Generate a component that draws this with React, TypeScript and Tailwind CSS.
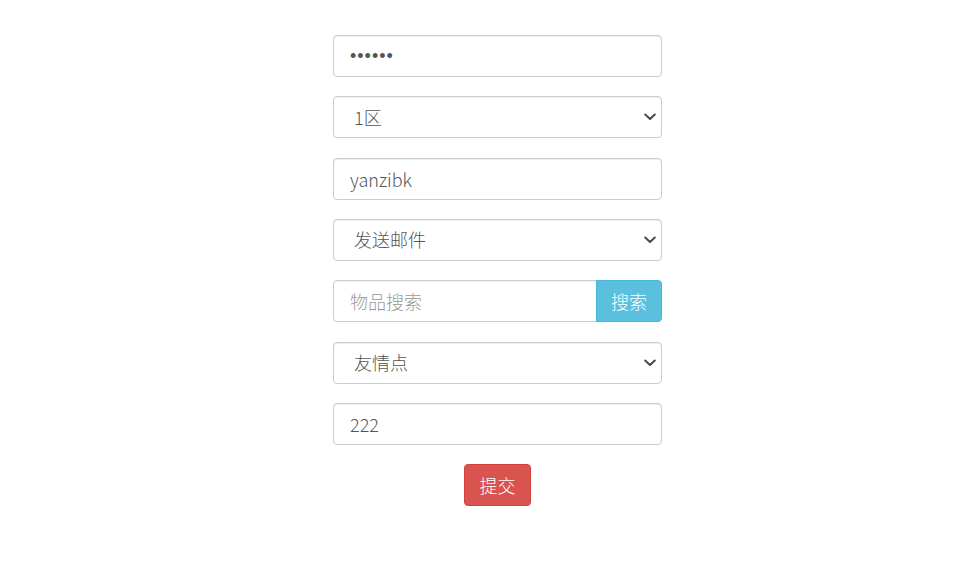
import React from "react";

const font = { fontFamily: '"Noto Sans CJK SC", "Open Sans", sans-serif' };

const inputCls =
  "block w-full h-[42px] px-[16px] text-[18px] font-light text-[#555] bg-white border border-[#ccc] rounded-[4px] shadow-[inset_0_1px_1px_rgba(0,0,0,0.075)] outline-none placeholder:text-[#999]";

function Select({ value, label }: { value: string; label: string }) {
  return (
    <div className="relative">
      <select
        className={inputCls + " appearance-none pl-[20px] pr-[30px]"}
        defaultValue={value}
      >
        <option value={value}>{label}</option>
      </select>
      <svg
        className="pointer-events-none absolute right-[6px] top-1/2 -translate-y-1/2"
        width="12"
        height="8"
        viewBox="0 0 12 8"
      >
        <polyline
          points="1.2,1.5 6,6 10.8,1.5"
          fill="none"
          stroke="#4a4a4a"
          strokeWidth="2"
          strokeLinecap="round"
          strokeLinejoin="round"
        />
      </svg>
    </div>
  );
}

export default function App() {
  return (
    <div className="min-h-[569px] bg-white pt-[35px]" style={font}>
      <form className="ml-[333px] w-[329px] flex flex-col gap-[19.33px]">
        <input
          type="password"
          defaultValue="123456"
          className={inputCls + " font-['Liberation_Sans',Arial,sans-serif] tracking-[1px]"}
        />
        <Select value="1" label="1区" />
        <input type="text" defaultValue="yanzibk" className={inputCls} />
        <Select value="mail" label="发送邮件" />
        <div className="flex h-[42px]">
          <input
            type="text"
            placeholder="物品搜索"
            className="block flex-1 min-w-0 h-[42px] px-[16px] text-[18px] font-light text-[#555] bg-white border border-[#ccc] rounded-l-[4px] shadow-[inset_0_1px_1px_rgba(0,0,0,0.075)] outline-none placeholder:text-[#999]"
          />
          <button
            type="button"
            className="w-[66px] h-[42px] -ml-px text-[18px] font-light text-white bg-[#5bc0de] border border-[#46b8da] rounded-r-[4px]"
          >
            搜索
          </button>
        </div>
        <Select value="f" label="友情点" />
        <input type="text" defaultValue="222" className={inputCls} />
        <div className="flex justify-center">
          <button
            type="button"
            className="w-[67px] h-[42px] text-[18px] font-light text-white bg-[#d9534f] border border-[#d43f3a] rounded-[4px]"
          >
            提交
          </button>
        </div>
      </form>
    </div>
  );
}
